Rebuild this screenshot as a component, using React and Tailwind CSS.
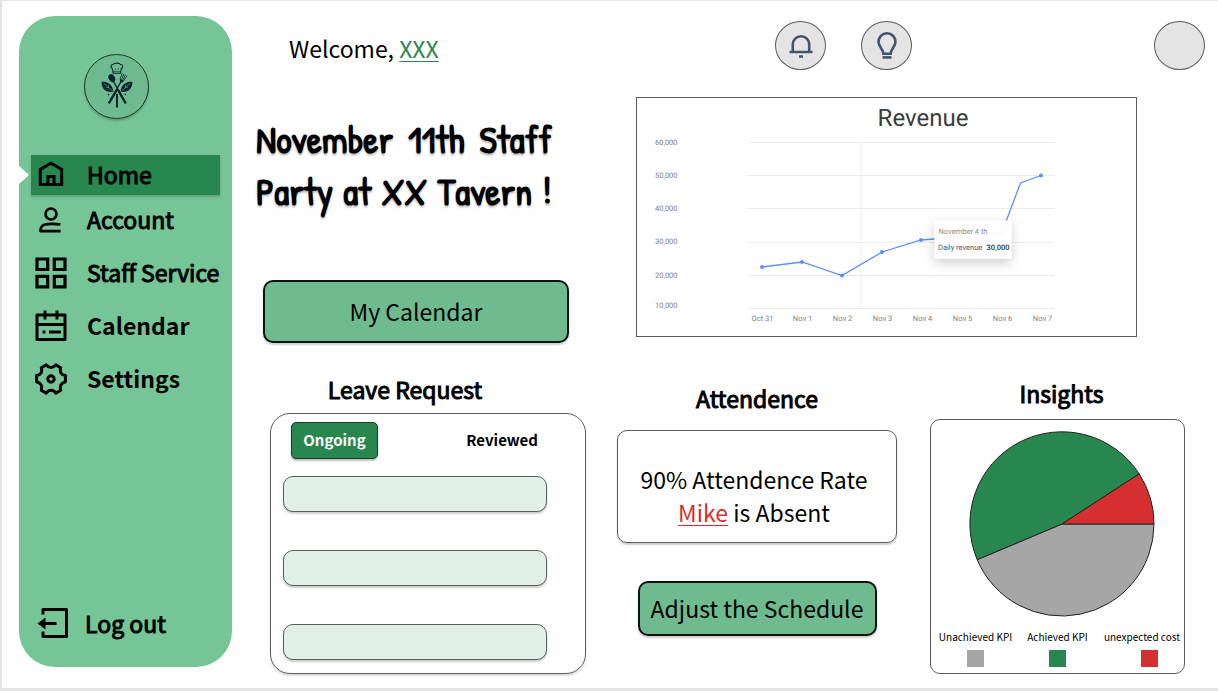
import React from "react";

const HomeIcon = () => (
  <svg viewBox="0 0 26 26" className="w-[26px] h-[26px]" fill="none" stroke="currentColor" strokeWidth="3" aria-hidden="true">
    <path d="M2.3 23.500V8.400L13 2.200l10.700 6.200v15.100z" />
    <path d="M10 23.500v-8h6v8" />
  </svg>
);

const AccountIcon = () => (
  <svg viewBox="0 0 32 32" className="w-8 h-8" fill="none" stroke="currentColor" strokeWidth="2.600" strokeLinejoin="round" aria-hidden="true">
    <circle cx="16" cy="10" r="5.500" />
    <path d="M25.400 20.500C22 19.700 12.500 19.600 10 20.500c-3.500 1-4.600 3.400-4.600 6.600h20.200" />
  </svg>
);

const GridIcon = () => (
  <svg viewBox="0 0 32 32" className="w-8 h-8" fill="none" stroke="currentColor" strokeWidth="3.200" aria-hidden="true">
    <path d="M2 2h10.700v10.500H2zM19.300 2H30v10.500H19.300zM2 19.300h10.700v10.500H2zM19.300 19.300H30v10.500H19.300z" />
  </svg>
);

const CalendarIcon = () => (
  <svg viewBox="0 0 32 32" className="w-8 h-8" fill="none" stroke="currentColor" strokeWidth="3" strokeLinejoin="round" aria-hidden="true">
    <path d="M2 5h28v24.500H2zM2 14.500h28M10 .500v9M22 .500v9M7.500 22h3M14 22h12" />
  </svg>
);

const SettingsIcon = () => (
  <svg viewBox="0 0 32 32" className="w-8 h-8" fill="none" stroke="currentColor" strokeWidth="3" strokeLinejoin="round" aria-hidden="true">
    <circle cx="16" cy="16" r="3.200" />
    <path d="M11.200 1.900L6.300 4.700C7.600 9 5.800 11.900 1.600 12.600v6.200c4.200 1.100 6 3.900 4.700 8.500l4.900 2.800c2.600-3.700 7-3.700 9.600 0l4.900-2.800c-1.300-4.600.500-7.400 4.700-8.500v-6.200c-4.200-.700-6-3.600-4.700-7.900l-4.900-2.800c-2.600 3.400-7 3.400-9.600 0z" />
  </svg>
);

const LogoutIcon = () => (
  <svg viewBox="0 0 32 32" className="w-8 h-8" fill="none" stroke="currentColor" strokeWidth="3" strokeLinejoin="round" aria-hidden="true">
    <path d="M6 7.500V2.500h23.500v27H6v-5M6 16.500h13.500" />
    <path d="M.500 16.500l8-6v12z" fill="currentColor" stroke="none" />
  </svg>
);

const BellIcon = () => (
  <svg viewBox="0 0 24 26" className="w-6 h-[26px]" fill="none" stroke="#44546f" strokeWidth="2.600" aria-hidden="true">
    <path d="M3.800 18.500v-7a8.200 8.200 0 0 1 16.400 0v7M.500 19h23M10 23.500h4" />
  </svg>
);

const BulbIcon = () => (
  <svg viewBox="0 0 20 28" className="w-5 h-7" fill="none" stroke="#44546f" strokeWidth="2.600" aria-hidden="true">
    <path d="M6.300 21.800c0-4.600-4.800-7-4.800-12a8.500 8.500 0 0 1 17 0c0 5-4.800 7.400-4.800 12z" />
    <path d="M5.500 25.400h9" />
  </svg>
);

const Logo = () => (
  <svg viewBox="24 24 195 195" className="w-16 h-16" fill="#10222c" role="img" aria-label="Restaurant logo">
    <path d="M111 79l-2-14c-7-3-6-13 2-13 3-6 20-6 23 0 8 0 9 10 2 13l-2 14z" fill="none" stroke="#10222c" strokeWidth="3.500" strokeLinejoin="round" />
    <path d="M111 74h23M118 69v-5M127 69v-5" fill="none" stroke="#10222c" strokeWidth="2" />
    <ellipse cx="107" cy="94" rx="9.500" ry="13" transform="rotate(-32 107 94)" />
    <path d="M112 104L148 169" stroke="#10222c" strokeWidth="4" />
    <path d="M127 132L149 170" stroke="#10222c" strokeWidth="7" strokeLinecap="round" />
    <path d="M138 100L99 169" stroke="#10222c" strokeWidth="4" />
    <path d="M121 133L99 170" stroke="#10222c" strokeWidth="7" strokeLinecap="round" />
    <path d="M139 80l-6 15c-1 6 7 11 11 6l10-14M144 82l-6 14M149 84l-7 14" fill="none" stroke="#10222c" strokeWidth="2.500" strokeLinecap="round" />
    <path d="M134 96l10 6-5 6-7-4z" />
    <path d="M123 143v42" stroke="#10222c" strokeWidth="6" />
    <path d="M75 105c18-1 34 6 37 31-20 3-36-5-37-31zM171 105c-18-1-34 6-37 31 20 3 36-5 37-31z" />
    <path d="M82 110l28 25M89 122l8 2M97 115v9M164 110l-28 25M157 122l-8 2M149 115v9" fill="none" stroke="#6dbb8e" strokeWidth="1.800" />
    <path d="M97 142l3 3-3 3-3-3zM149 142l3 3-3 3-3-3z" />
  </svg>
);

const heavy = "[-webkit-text-stroke:1px_currentColor]";

const navItems = [
  { label: "Account", Icon: AccountIcon, weight: heavy },
  { label: "Staff Service", Icon: GridIcon, weight: heavy },
  { label: "Calendar", Icon: CalendarIcon, weight: "font-bold" },
  { label: "Settings", Icon: SettingsIcon, weight: "font-bold" },
];

function Sidebar() {
  return (
    <aside className="relative mt-[15px] mb-[21px] ml-[17px] flex w-[213px] shrink-0 flex-col rounded-[36px] bg-[#76c596] text-[23px]">
      <svg viewBox="0 0 10 18" className="absolute top-[150px] left-0 h-[18px] w-[10px]" aria-hidden="true">
        <path d="M0 0l10 9-10 9z" fill="#fff" />
      </svg>
      <div className="mt-[38px] ml-[65px] flex h-[65px] w-[65px] items-center justify-center rounded-full border border-[#1c3a2a] bg-[#6dbb8e] shadow-[0_2px_2px_rgba(0,0,0,0.2)]">
        <Logo />
      </div>
      <nav className="mt-9 flex flex-col" aria-label="Main">
        <a href="#home" aria-current="page" className="mr-3 ml-3 flex h-10 items-center bg-[#28864f] pb-0.5 pl-1 shadow-[0_2px_2px_rgba(0,0,0,0.2)]">
          <span className="flex w-8 justify-center"><HomeIcon /></span>
          <span className={"ml-5 " + heavy}>Home</span>
        </a>
        <div className="-mt-0.5 flex flex-col">
          {navItems.map(({ label, Icon, weight }) => (
            <a key={label} href={"#" + label.toLowerCase().replace(" ", "-")} className="ml-4 flex h-[53px] items-center whitespace-nowrap">
              <Icon />
              <span className={"ml-5 " + weight}>{label}</span>
            </a>
          ))}
        </div>
      </nav>
      <a href="#logout" className="mt-auto mb-[18px] ml-[18px] flex h-[52px] items-center">
        <LogoutIcon />
        <span className={"ml-4 " + heavy}>Log out</span>
      </a>
    </aside>
  );
}

const points = [[250, 338], [330, 328], [410, 355], [490, 308], [568, 284], [648, 278], [729, 271], [767, 170], [808, 155]];
const yTicks = [["60,000", 88], ["50,000", 154], ["40,000", 220], ["30,000", 286], ["20,000", 354], ["10,000", 414]];
const gridLines = [89, 155, 221, 289, 355, 421];
const xTicks = ["Oct 31", "Nov 1", "Nov 2", "Nov 3", "Nov 4", "Nov 5", "Nov 6", "Nov 7"];

function RevenueChart() {
  return (
    <section className="mt-[27px] mr-[81px] ml-[19px] border border-[#5c5c5c]">
      <svg viewBox="0 0 998 476" className="block w-full font-['Roboto',sans-serif] [text-rendering:geometricPrecision]" role="img" aria-label="Daily revenue, October 31 to November 7">
        <defs>
          <filter id="tip" x="-30%" y="-50%" width="160%" height="240%">
            <feDropShadow dx="0" dy="8" stdDeviation="12" floodOpacity="0.2" />
          </filter>
        </defs>
        <text x="572" y="56" textAnchor="middle" fontSize="48" fill="#3c3c3c">Revenue</text>
        {gridLines.map((y) => <path key={y} d={`M222 ${y}H834`} stroke="#ececec" strokeWidth="2" />)}
        <path d="M447 89V421" stroke="#f2f2f2" strokeWidth="2" />
        {yTicks.map(([t, y]) => <text key={t} x="36" y={y + 6} fontSize="15" fill="#808080">{t}</text>)}
        {xTicks.map((t, i) => <text key={t} x={251 + i * 80} y="445" textAnchor="middle" fontSize="15" fill="#808080">{t}</text>)}
        <polyline points={points.map((p) => p.join(",")).join(" ")} fill="none" stroke="#5b8ff9" strokeWidth="2.600" />
        {points.filter((_, i) => i !== 7).map(([x, y]) => <circle key={x} cx={x} cy={y} r="4" fill="#5b8ff9" />)}
        <rect x="595" y="245" width="154" height="76" rx="2" fill="#fff" fillOpacity="0.96" filter="url(#tip)" />
        <text x="603" y="272" fontSize="15" fill="#8c8c8c">November 4 th</text>
        <text x="602" y="304" fontSize="15" fill="#595959">Daily revenue</text>
        <text x="745" y="304" fontSize="15" fill="#333" fontWeight="500" textAnchor="end">30,000</text>
      </svg>
    </section>
  );
}

const legend = [
  { label: "Unachieved KPI", color: "bg-[#a6a6a6]", align: "items-center", swatch: "" },
  { label: "Achieved KPI", color: "bg-[#28864f]", align: "items-center", swatch: "" },
  { label: "unexpected cost", color: "bg-[#d53030]", align: "items-end", swatch: "mr-[22px]" },
];

function Insights() {
  return (
    <section className="pt-10">
      <h2 className={"pl-2 text-center text-[23px] leading-8 " + heavy}>Insights</h2>
      <div className="mt-[10px] h-[255px] rounded-[10px] border border-[#5c5c5c] pt-[11px]">
        <svg viewBox="0 0 186 186" className="mx-auto block h-[186px] w-[194px] pl-2" stroke="#222" strokeWidth="1" role="img" aria-label="KPI breakdown">
          <path d="M93 93H185A92 92 0 0 1 8.200 128.700z" fill="#a6a6a6" />
          <path d="M93 93L8.200 128.700A92 92 0 0 1 170.200 42.900z" fill="#28864f" />
          <path d="M93 93L170.200 42.900A92 92 0 0 1 185 93z" fill="#d53030" />
        </svg>
        <ul className="mt-3 grid grid-cols-[75px_1fr_78px] pr-1 pl-[7px] text-[10px] leading-4">
          {legend.map((l) => (
            <li key={l.label} className={"flex flex-col gap-[5px] whitespace-nowrap " + l.align}>
              {l.label}
              <span className={"h-[17px] w-[17px] " + l.color + " " + l.swatch} />
            </li>
          ))}
        </ul>
      </div>
    </section>
  );
}

export default function App() {
  return (
    <div className="flex min-h-screen border-t border-b-3 border-l-2 border-[#e4e4e4] bg-white font-['Noto_Sans_CJK_SC',sans-serif] text-black">
      <Sidebar />
      <main className="flex flex-1 pt-5">
        <div className="w-[354px] shrink-0">
          <p className="flex h-[54px] items-center pl-[57px] text-[23px] whitespace-pre">
            Welcome, <a href="#profile" className="text-[#28864f] underline decoration-1 underline-offset-3">XXX</a>
          </p>
          <h1 className="mt-[38px] ml-6 w-[296px] font-['Patrick_Hand','Noto_Sans_CJK_SC',cursive] text-[38px] leading-[52px] font-bold [font-variant-ligatures:none] [text-align-last:justify] [text-shadow:0_2px_2px_rgba(0,0,0,0.25)]">
            November 11th Staff<br />Party at XX Tavern !
          </h1>
          <button type="button" className="mt-[63px] ml-[31px] block h-[63px] w-[306px] rounded-[10px] border-2 border-[#111] bg-[#6dbb8e] text-[23px] shadow-[0_2px_2px_rgba(0,0,0,0.2)]">My Calendar</button>
          <h2 className={"mt-[30px] mr-[39px] ml-[31px] text-center text-[23px] leading-8 " + heavy}>Leave Request</h2>
          <section className="mt-2 ml-[38px] rounded-[20px] border border-[#5c5c5c] pt-2 pr-[38px] pb-[13px] pl-3 shadow-[0_2px_2px_rgba(0,0,0,0.15)]">
            <div className="flex items-center justify-between pr-[9px] pl-2 text-[15px] font-bold">
              <button type="button" className="h-[37px] w-[87px] rounded-[5px] border border-[#1c3a2a] bg-[#28864f] text-white shadow-[0_2px_2px_rgba(0,0,0,0.25)]">Ongoing</button>
              <button type="button" className="h-[37px]">Reviewed</button>
            </div>
            <ul className="mt-[17px] flex flex-col gap-[38px]">
              {[1, 2, 3].map((n) => (
                <li key={n} className="h-9 rounded-[10px] border border-[#5c5c5c] bg-[#e1f1e7] shadow-[0_2px_2px_rgba(0,0,0,0.2)]" />
              ))}
            </ul>
          </section>
        </div>
        <div className="ml-[31px] flex-1">
          <header className="mr-[13px] ml-[158px] flex items-center">
            <button type="button" aria-label="Notifications" className="flex h-[49px] w-[51px] items-center justify-center rounded-[50%] border border-[#5c5c5c] bg-[#e4e4e4]"><BellIcon /></button>
            <button type="button" aria-label="Tips" className="ml-[35px] flex h-[49px] w-[51px] items-center justify-center rounded-[50%] border border-[#5c5c5c] bg-[#e4e4e4]"><BulbIcon /></button>
            <button type="button" aria-label="Profile" className="ml-auto h-[49px] w-[51px] rounded-[50%] border border-[#5c5c5c] bg-[#e4e4e4]" />
          </header>
          <RevenueChart />
          <div className="grid grid-cols-[280fr_255fr] gap-[33px] pr-[33px]">
            <section className="pt-[45px]">
              <h2 className={"text-center text-[23px] leading-8 " + heavy}>Attendence</h2>
              <div className="mt-4 h-[113px] rounded-[10px] border border-[#5c5c5c] pt-8 pr-[6px] text-center text-[23px] leading-[33px] whitespace-nowrap shadow-[0_2px_2px_rgba(0,0,0,0.2)]">
                <p>90% Attendence Rate</p>
                <p><a href="#mike" className="text-[#d53030] underline decoration-1 underline-offset-3">Mike</a> is Absent</p>
              </div>
              <button type="button" className="mx-auto mt-[38px] block h-[55px] w-[239px] rounded-[10px] border-2 border-[#111] bg-[#6dbb8e] text-[23px] whitespace-nowrap shadow-[0_2px_2px_rgba(0,0,0,0.2)]">Adjust the Schedule</button>
            </section>
            <Insights />
          </div>
        </div>
      </main>
    </div>
  );
}
